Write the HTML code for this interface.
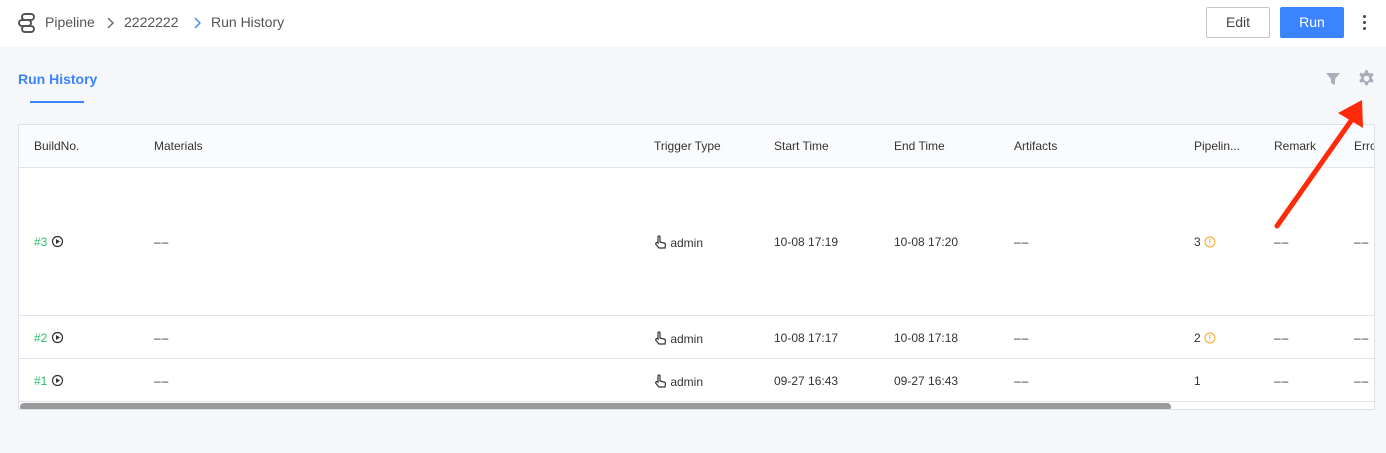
<!DOCTYPE html><html><head><style>
body{margin:0;width:1386px;height:453px;background:#f6f7fb;font-family:"Liberation Sans",sans-serif;position:relative;overflow:hidden;color:#333}
.top{position:absolute;left:0;top:0;width:1386px;height:46px;background:#fff}
.abs{position:absolute}
.bc{font-size:14px;color:#555;top:14px}
.tbl{position:absolute;left:18px;top:124px;width:1357px;height:286px;background:#fff;border:1px solid #dde0e6;box-sizing:border-box;overflow:hidden}
.t{position:absolute;font-size:12px;color:#333;white-space:nowrap}
.h{color:#333;top:14px}
.line{position:absolute;left:0;width:100%;height:1px;background:#e0e2e7}
.g{color:#2dbd6e}
.d{letter-spacing:1px}
svg.i{vertical-align:-2px}
</style></head><body>
<div class="top"></div>
<svg class="abs" style="left:17px;top:12px" width="20" height="22" viewBox="0 0 20 22" fill="none" stroke="#555" stroke-width="2"><rect x="5" y="2" width="12" height="6" rx="3"/><rect x="2" y="8" width="12" height="6" rx="3"/><rect x="5" y="14" width="12" height="6" rx="3"/></svg>
<div class="abs bc" style="left:45px">Pipeline</div>
<svg class="abs" style="left:106px;top:17px" width="8" height="12"><path d="M2 1l5 5-5 5" fill="none" stroke="#666" stroke-width="1.4"/></svg>
<div class="abs bc" style="left:124px">2222222</div>
<svg class="abs" style="left:193px;top:17px" width="8" height="12"><path d="M2 1l5 5-5 5" fill="none" stroke="#3a84ff" stroke-width="1.4"/></svg>
<div class="abs bc" style="left:211px">Run History</div>
<div class="abs" style="left:1206px;top:7px;width:64px;height:31px;border:1px solid #c4c6cc;border-radius:2px;box-sizing:border-box;font-size:14px;text-align:center;line-height:29px;color:#444">Edit</div>
<div class="abs" style="left:1280px;top:7px;width:64px;height:31px;background:#3a84ff;border-radius:2px;font-size:14px;text-align:center;line-height:31px;color:#fff">Run</div>
<div class="abs" style="left:1363px;top:15px;width:3px;height:3px;background:#444;border-radius:50%;box-shadow:0 6px 0 #444,0 12px 0 #444"></div>
<div class="abs" style="left:18px;top:71px;font-size:14px;font-weight:bold;color:#3a84ff">Run History</div>
<div class="abs" style="left:30px;top:101px;width:54px;height:2px;background:#3a84ff"></div>
<svg class="abs" style="left:1326px;top:72px" width="14" height="14" viewBox="0 0 14 14"><path d="M0 1h14l-5 6v6l-4-2V7z" fill="#a9afb9"/></svg>
<svg class="abs" style="left:1357px;top:69px" width="19" height="19" viewBox="0 0 24 24"><path fill="#a9afb9" fill-rule="evenodd" d="M13.7 1.5l.6 3a8 8 0 0 1 2.2 1.3l2.9-1 1.7 3-2.3 2a8 8 0 0 1 0 2.5l2.3 2-1.7 3-2.9-1a8 8 0 0 1-2.2 1.3l-.6 3h-3.4l-.6-3a8 8 0 0 1-2.2-1.3l-2.9 1-1.7-3 2.3-2a8 8 0 0 1 0-2.5l-2.3-2 1.7-3 2.9 1a8 8 0 0 1 2.2-1.3l.6-3zM12 8.5a3.5 3.5 0 1 0 0 7 3.5 3.5 0 0 0 0-7z"/></svg>
<div class="tbl">
<div class="abs" style="left:0;top:0;width:100%;height:43px;background:#fafbfd"></div>
<div class="line" style="top:42px"></div>
<div class="line" style="top:190px"></div>
<div class="line" style="top:233px"></div>
<div class="line" style="top:276px"></div>
<div class="t h" style="left:15px">BuildNo.</div><div class="t h" style="left:135px">Materials</div><div class="t h" style="left:635px">Trigger Type</div><div class="t h" style="left:755px">Start Time</div><div class="t h" style="left:875px">End Time</div><div class="t h" style="left:995px">Artifacts</div><div class="t h" style="left:1175px">Pipelin...</div><div class="t h" style="left:1255px">Remark</div><div class="t h" style="left:1335px">Erro</div>
<!-- row template vars via repetition -->
<div class="t g" style="left:15px;top:110px">#3 <svg class="i" width="13" height="13" viewBox="0 0 13 13"><circle cx="6.5" cy="6.5" r="5" fill="none" stroke="#333" stroke-width="1.2"/><path d="M5 4v5l4-2.5z" fill="#333"/></svg></div>
<div class="t d" style="left:135px;top:110px">––</div><div class="t" style="left:635px;top:110px"><svg class="i" width="13" height="14" viewBox="0 0 13 14"><path d="M4 8V2a1 1 0 0 1 2 0v5l4 1a2 2 0 0 1 1.5 2l-.5 3H5L2 9.5a1 1 0 0 1 2-1.5z" fill="none" stroke="#333" stroke-width="1.2"/></svg> admin</div><div class="t" style="left:755px;top:110px">10-08 17:19</div><div class="t" style="left:875px;top:110px">10-08 17:20</div><div class="t d" style="left:995px;top:110px">––</div><div class="t" style="left:1175px;top:110px">3 <svg class="i" width="12" height="12"><circle cx="6" cy="6" r="5" fill="none" stroke="#f5a623"/><path d="M6 3v4M6 8.5v1" stroke="#f5a623"/></svg></div><div class="t d" style="left:1255px;top:110px">––</div><div class="t d" style="left:1335px;top:110px">––</div>
<div class="t g" style="left:15px;top:206px">#2 <svg class="i" width="13" height="13" viewBox="0 0 13 13"><circle cx="6.5" cy="6.5" r="5" fill="none" stroke="#333" stroke-width="1.2"/><path d="M5 4v5l4-2.5z" fill="#333"/></svg></div>
<div class="t d" style="left:135px;top:206px">––</div><div class="t" style="left:635px;top:206px"><svg class="i" width="13" height="14" viewBox="0 0 13 14"><path d="M4 8V2a1 1 0 0 1 2 0v5l4 1a2 2 0 0 1 1.5 2l-.5 3H5L2 9.5a1 1 0 0 1 2-1.5z" fill="none" stroke="#333" stroke-width="1.2"/></svg> admin</div><div class="t" style="left:755px;top:206px">10-08 17:17</div><div class="t" style="left:875px;top:206px">10-08 17:18</div><div class="t d" style="left:995px;top:206px">––</div><div class="t" style="left:1175px;top:206px">2 <svg class="i" width="12" height="12"><circle cx="6" cy="6" r="5" fill="none" stroke="#f5a623"/><path d="M6 3v4M6 8.5v1" stroke="#f5a623"/></svg></div><div class="t d" style="left:1255px;top:206px">––</div><div class="t d" style="left:1335px;top:206px">––</div>
<div class="t g" style="left:15px;top:249px">#1 <svg class="i" width="13" height="13" viewBox="0 0 13 13"><circle cx="6.5" cy="6.5" r="5" fill="none" stroke="#333" stroke-width="1.2"/><path d="M5 4v5l4-2.5z" fill="#333"/></svg></div>
<div class="t d" style="left:135px;top:249px">––</div><div class="t" style="left:635px;top:249px"><svg class="i" width="13" height="14" viewBox="0 0 13 14"><path d="M4 8V2a1 1 0 0 1 2 0v5l4 1a2 2 0 0 1 1.5 2l-.5 3H5L2 9.5a1 1 0 0 1 2-1.5z" fill="none" stroke="#333" stroke-width="1.2"/></svg> admin</div><div class="t" style="left:755px;top:249px">09-27 16:43</div><div class="t" style="left:875px;top:249px">09-27 16:43</div><div class="t d" style="left:995px;top:249px">––</div><div class="t" style="left:1175px;top:249px">1</div><div class="t d" style="left:1255px;top:249px">––</div><div class="t d" style="left:1335px;top:249px">––</div>
<div class="abs" style="left:1px;top:278px;width:1151px;height:8px;background:#9a9a9a;border-radius:4px"></div>
</div>
<svg class="abs" style="left:0;top:0" width="1386" height="453"><line x1="1277" y1="226" x2="1353" y2="118" stroke="#ff2a0a" stroke-width="5" stroke-linecap="round"/><path d="M1362 100L1338 113 1363 128z" fill="#ff2a0a"/></svg>
</body></html>
